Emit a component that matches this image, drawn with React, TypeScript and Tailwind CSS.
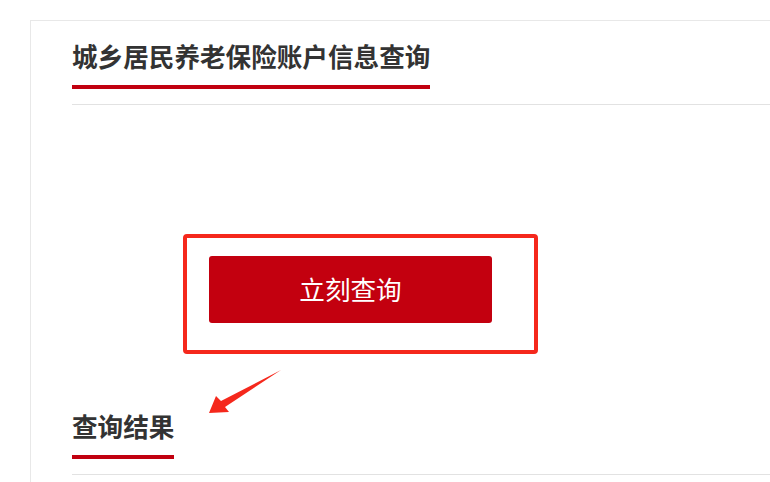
const font = { fontFamily: '"Microsoft YaHei", "Noto Sans CJK SC", "Noto Sans", sans-serif' };

const SectionTitle = ({ text }: { text: string }) => {
  return (
    <div className="border-b border-[#e2e2e2] pb-[15px]">
      <h2 className="inline-block border-b-4 border-[#c1000f] pb-[12px] text-[25.6px] font-bold leading-[34px] text-[#333333]">
        {text}
      </h2>
    </div>
  );
};

export default function App() {
  return (
    <div className="relative h-[482px] w-[770px] overflow-hidden bg-white pl-[30px] pt-[20px]" style={font}>
      <div className="h-full border-l border-t border-[#e8e8e8] pl-[41px] pt-[18px]">
        <SectionTitle text="城乡居民养老保险账户信息查询" />

        <div className="pt-[151px]">
          <button className="ml-[137px] flex h-[67px] w-[283px] items-center justify-center rounded-[3px] bg-[#c3000f] text-[25.6px] text-white">
            立刻查询
          </button>
        </div>

        <div className="pt-[86px]">
          <SectionTitle text="查询结果" />
        </div>
      </div>

      {/* annotation overlay */}
      <div className="pointer-events-none absolute left-[183px] top-[234px] h-[120px] w-[355px] rounded-[4px] border-[4px] border-[#f5281c]" />
      <svg className="pointer-events-none absolute left-0 top-0" width="770" height="482">
        <polygon points="209,413 216,396 221,401 281,370 225,407 229,412" fill="#f5281c" />
      </svg>
    </div>
  );
}
